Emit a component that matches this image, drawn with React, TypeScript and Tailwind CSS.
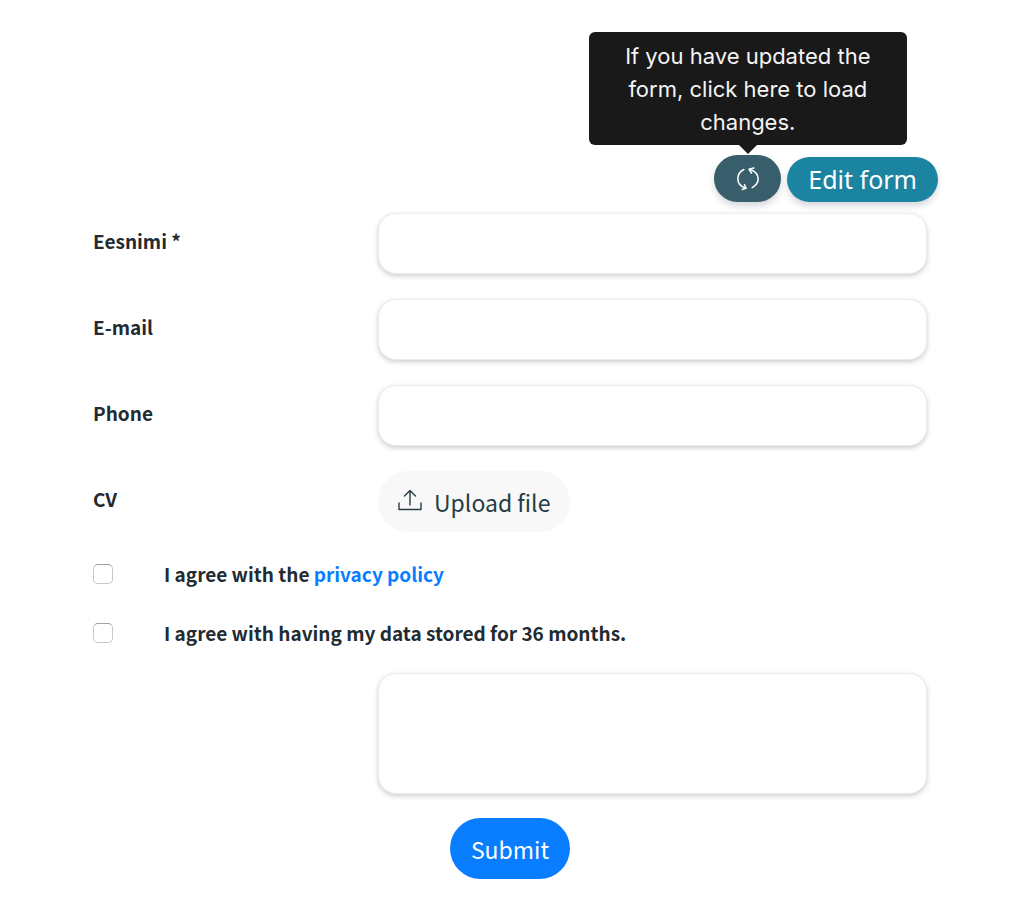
import type { ReactNode } from "react";

const fieldClass =
  "block w-full rounded-[18px] border border-[#ececee] bg-white px-5 text-xl text-[#212b31] shadow-[0_2px_5px_rgba(20,30,40,0.22)] outline-none focus:border-[#80bdff]";

const rowClass = "grid grid-cols-[285px_1fr] items-start";

function TextRow({ id, label, type = "text", required = false }: { id: string; label: string; type?: string; required?: boolean }) {
  return (
    <div className={rowClass}>
      <label htmlFor={id} className="pt-3 font-bold">
        {label}
      </label>
      <input id={id} type={type} required={required} className={`${fieldClass} h-[61px]`} />
    </div>
  );
}

function ConsentRow({ id, children }: { id: string; children: ReactNode }) {
  return (
    <div className="flex items-center gap-[51px]">
      <input
        id={id}
        type="checkbox"
        className="size-5 shrink-0 appearance-none rounded-[5px] border border-[#c4c9cd] border-t-[#98a2a9] bg-white checked:bg-[#087dff]"
      />
      <label htmlFor={id} className="font-bold">
        {children}
      </label>
    </div>
  );
}

function RefreshIcon() {
  return (
    <svg viewBox="0 0 26 26" className="size-6" fill="none" stroke="currentColor" strokeWidth="1.7" strokeLinecap="round" strokeLinejoin="round" aria-hidden="true">
      <path d="M8.500 2.700C4.500 4.700 2 8.500 2 12.500c0 4.600 3.200 8.800 8.400 10.500" />
      <path d="M6.800 24.300l4-1.200-1.600-3.900" />
      <path d="M17.500 22.300C21.500 20.300 24 16.700 24 12.500c0-4.400-3.400-8.600-9-9.900" />
      <path d="M19.200 1l-5 1.500 2.600 4.200" />
    </svg>
  );
}

function UploadIcon() {
  return (
    <svg viewBox="0 0 24 22" className="mb-1 h-[22px] w-6" fill="none" stroke="currentColor" strokeWidth="1.4" strokeLinecap="round" strokeLinejoin="round" aria-hidden="true">
      <path d="M1 14v6.500h22V14" />
      <path d="M12 16V1.500M6.500 7L12 1.500 17.500 7" />
    </svg>
  );
}

export default function App() {
  return (
    <main className="min-h-screen bg-white pr-[86px] pl-[93px] pt-[155px] pb-10 font-['Noto_Sans_CJK_SC','Noto_Sans',sans-serif] text-[19px] leading-8 text-[#212b31]">
      <div className="flex items-end justify-end gap-1.5">
        <div className="relative">
          <button
            type="button"
            aria-label="Reload form"
            aria-describedby="reload-tip"
            className="flex h-[47px] w-[67px] items-center justify-center rounded-full bg-[#385e6b] text-white shadow-[0_4px_6px_rgba(30,40,60,0.18)]"
          >
            <RefreshIcon />
          </button>
          <div
            id="reload-tip"
            role="tooltip"
            className="absolute bottom-full left-1/2 mb-2.5 w-[318px] -translate-x-1/2 rounded-md bg-[#191919] px-8 pt-2 pb-1.5 text-center font-['Inter',sans-serif] text-[22px] leading-[33px] text-[#f4f4f4]"
          >
            If you have updated the form, click here to load changes.
            <svg viewBox="0 0 18 9" className="absolute top-full left-1/2 h-[9px] w-[18px] -translate-x-1/2" aria-hidden="true">
              <path d="M0 0h18L9 9z" fill="#191919" />
            </svg>
          </div>
        </div>
        <button
          type="button"
          className="h-[45px] rounded-full bg-[#1b84a1] px-[21px] pb-0.5 font-['Noto_Sans',sans-serif] text-[25px] leading-8 text-white shadow-[0_4px_6px_rgba(30,40,60,0.18)]"
        >
          Edit form
        </button>
      </div>

      <form className="mt-[11px] mr-[11px]" onSubmit={(e) => e.preventDefault()}>
        <div className="flex flex-col gap-[25px]">
          <TextRow id="first-name" label="Eesnimi *" required />
          <TextRow id="email" label="E-mail" type="email" />
          <TextRow id="phone" label="Phone" type="tel" />
          <div className={rowClass}>
            <span id="cv-label" className="pt-3 font-bold">
              CV
            </span>
            <div>
              <button
                type="button"
                aria-describedby="cv-label"
                className="flex h-[61px] items-center gap-3 rounded-full bg-[#f8f8f8] px-5 text-[23px] text-[#263c45]"
              >
                <UploadIcon />
                Upload file
              </button>
            </div>
          </div>
        </div>

        <div className="mt-[26px] flex flex-col gap-[27px]">
          <ConsentRow id="privacy">
            I agree with the{" "}
            <a href="#privacy-policy" className="text-[#087dff]">
              privacy policy
            </a>
          </ConsentRow>
          <ConsentRow id="storage">I agree with having my data stored for 36 months.</ConsentRow>
        </div>

        <div className="mt-6 ml-[285px]">
          <textarea aria-label="Message" className={`${fieldClass} h-[121px] resize-none py-4`} />
        </div>
        <div className="mt-6 flex justify-center">
          <button type="submit" className="h-[61px] rounded-full bg-[#087dff] px-[21px] text-[23px] text-white">
            Submit
          </button>
        </div>
      </form>
    </main>
  );
}
